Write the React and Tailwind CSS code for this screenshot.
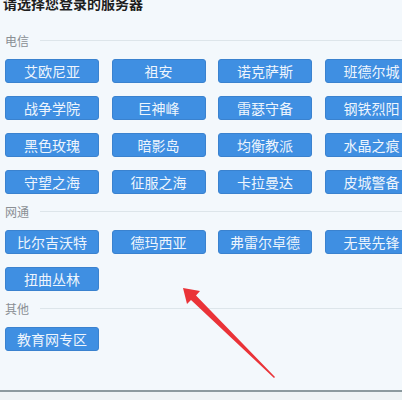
import React from "react";

const groups = [
  { name: "电信", items: ["艾欧尼亚", "祖安", "诺克萨斯", "班德尔城", "战争学院", "巨神峰", "雷瑟守备", "钢铁烈阳", "黑色玫瑰", "暗影岛", "均衡教派", "水晶之痕", "守望之海", "征服之海", "卡拉曼达", "皮城警备"] },
  { name: "网通", items: ["比尔吉沃特", "德玛西亚", "弗雷尔卓德", "无畏先锋", "扭曲丛林"] },
  { name: "其他", items: ["教育网专区"] },
];

export default function App() {
  return (
    <div
      className="relative w-[402px] h-[400px] overflow-hidden bg-[#eef3f5]"
      style={{ fontFamily: '"Noto Sans CJK SC", "Noto Sans", sans-serif' }}
    >
      <div className="h-[392px] bg-[#f3f8fc] border-b-2 border-[#8c9a9f] pl-[5px] flex flex-col">
        <div className="mt-[-7px] mb-[18px] leading-[20px] text-[14px] font-bold text-[#1e1e1e] -ml-[2px]">
          请选择您登录的服务器
        </div>
        {groups.map((g, gi) => (
          <div key={g.name} className={gi === 0 ? "" : "mt-[8px]"}>
            <div className="h-[20px] flex items-center">
              <span className="w-[35px] shrink-0 text-[12px] leading-[20px] text-[#8a8f94]">{g.name}</span>
              <div className="flex-1 h-px bg-[#dde5ea] -mt-[2px]"></div>
            </div>
            <div className="mt-[8px] grid grid-cols-[repeat(4,94px)] gap-x-[12.5px] gap-y-[13px]">
              {g.items.map((it) => (
                <div
                  key={it}
                  className="h-[24px] rounded-[3px] bg-[#3f8fe2] border border-[#3a82cf] flex items-center justify-center text-[14px] leading-none text-[#eef5fd] whitespace-nowrap"
                >
                  {it}
                </div>
              ))}
            </div>
          </div>
        ))}
      </div>
      <svg className="absolute left-0 top-0 pointer-events-none" width="402" height="400" viewBox="0 0 402 400">
        <polygon
          points="183,288 200,291 196,295.5 275,377 274,378 191,300 187,304"
          fill="#ea3338"
        />
      </svg>
    </div>
  );
}
